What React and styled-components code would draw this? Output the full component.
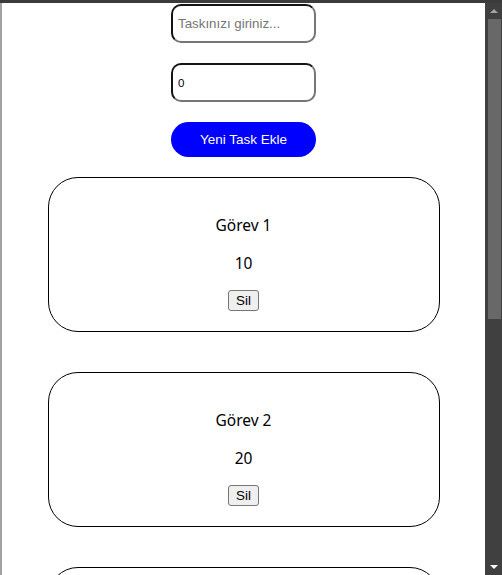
import React from "react";
import styled, { createGlobalStyle } from "styled-components";

const Global = createGlobalStyle`
  html, body { margin: 0; padding: 0; overflow: hidden; background: #ffffff; }
  * { box-sizing: border-box; }
`;

const Frame = styled.div`
  width: 502px;
  height: 575px;
  display: flex;
  flex-direction: column;
  overflow: hidden;
`;

const TopStrip = styled.div`
  height: 3px;
  flex: 0 0 3px;
  background: #3b3b3b;
`;

const Body = styled.div`
  flex: 1;
  min-height: 0;
  display: flex;
`;

const LeftEdge = styled.div`
  width: 2px;
  flex: 0 0 2px;
  background: #a2a2a2;
`;

const Viewport = styled.div`
  flex: 1;
  min-width: 0;
  overflow: hidden;
  background: #ffffff;
  padding-top: 1px;
  display: flex;
  flex-direction: column;
  align-items: center;
  gap: 20px;
`;

const Scrollbar = styled.div`
  width: 17px;
  flex: 0 0 17px;
  background: #404040;
  display: flex;
  flex-direction: column;
  align-items: center;
`;

const ArrowBox = styled.div`
  height: 16px;
  flex: 0 0 16px;
  width: 100%;
  display: flex;
  align-items: center;
  justify-content: center;
  padding-left: 1px;
`;

const Arrow = styled.div`
  width: 0;
  height: 0;
  border-left: 4px solid transparent;
  border-right: 4px solid transparent;
  ${(p) =>
    p.$up
      ? `border-bottom: 4px solid #a3a3a3;`
      : `border-top: 4px solid #ffffff;`}
`;

const Thumb = styled.div`
  width: 13px;
  height: 300px;
  flex: 0 0 300px;
  margin-left: 1px;
  background: #686868;
`;

const Track = styled.div`
  flex: 1;
`;

const TextInput = styled.input`
  width: 145px;
  height: 39px;
  flex: 0 0 auto;
  border-width: 2px;
  border-style: solid;
  border-color: #141414 #767676 #767676 #141414;
  border-radius: 10px;
  padding: 0 5px;
  font-family: "Liberation Sans", Arial, sans-serif;
  font-size: ${(p) => p.$fs || "13.33px"};
  color: #000;
  background: #fff;
  outline: none;
  &::placeholder { color: #757575; }
  &::-webkit-outer-spin-button,
  &::-webkit-inner-spin-button { -webkit-appearance: none; margin: 0; }
  -moz-appearance: textfield;
`;

const AddButton = styled.button`
  width: 145px;
  height: 35px;
  flex: 0 0 auto;
  border: none;
  border-radius: 18px;
  background: #0000ff;
  color: #ffffff;
  font-family: "Liberation Sans", Arial, sans-serif;
  font-size: 13.5px;
  cursor: pointer;
`;

const CardList = styled.div`
  display: flex;
  flex-direction: column;
  align-items: center;
  gap: 40px;
`;

const Card = styled.div`
  width: 392px;
  flex: 0 0 auto;
  border: 1px solid #000;
  border-radius: 30px;
  padding: 20px;
  display: flex;
  flex-direction: column;
  align-items: center;
  font-family: "Noto Sans", "Open Sans", sans-serif;
  color: #000;
`;

const CardText = styled.p`
  margin: 16px 0 0;
  font-size: 15.5px;
  line-height: 22px;
`;

const DeleteButton = styled.button`
  margin-top: 16px;
  height: 21px;
  padding: 0 7px;
  border: 1px solid #767676;
  border-radius: 3px;
  background: #efefef;
  color: #000;
  font-family: "Liberation Sans", Arial, sans-serif;
  font-size: 13.33px;
  line-height: 17px;
`;

const tasks = [
  { id: 1, name: "Görev 1", value: 10 },
  { id: 2, name: "Görev 2", value: 20 },
  { id: 3, name: "Görev 3", value: 30 },
];

export default function App() {
  return (
    <>
      <Global />
      <Frame>
        <TopStrip />
        <Body>
          <LeftEdge />
          <Viewport>
            <TextInput type="text" placeholder="Taskınızı giriniz..." />
            <TextInput type="number" defaultValue={0} $fs="11.5px" />
            <AddButton>Yeni Task Ekle</AddButton>
            <CardList>
              {tasks.map((t) => (
                <Card key={t.id}>
                  <CardText>{t.name}</CardText>
                  <CardText>{t.value}</CardText>
                  <DeleteButton>Sil</DeleteButton>
                </Card>
              ))}
            </CardList>
          </Viewport>
          <Scrollbar>
            <ArrowBox>
              <Arrow $up />
            </ArrowBox>
            <Thumb />
            <Track />
            <ArrowBox>
              <Arrow />
            </ArrowBox>
          </Scrollbar>
        </Body>
      </Frame>
    </>
  );
}
